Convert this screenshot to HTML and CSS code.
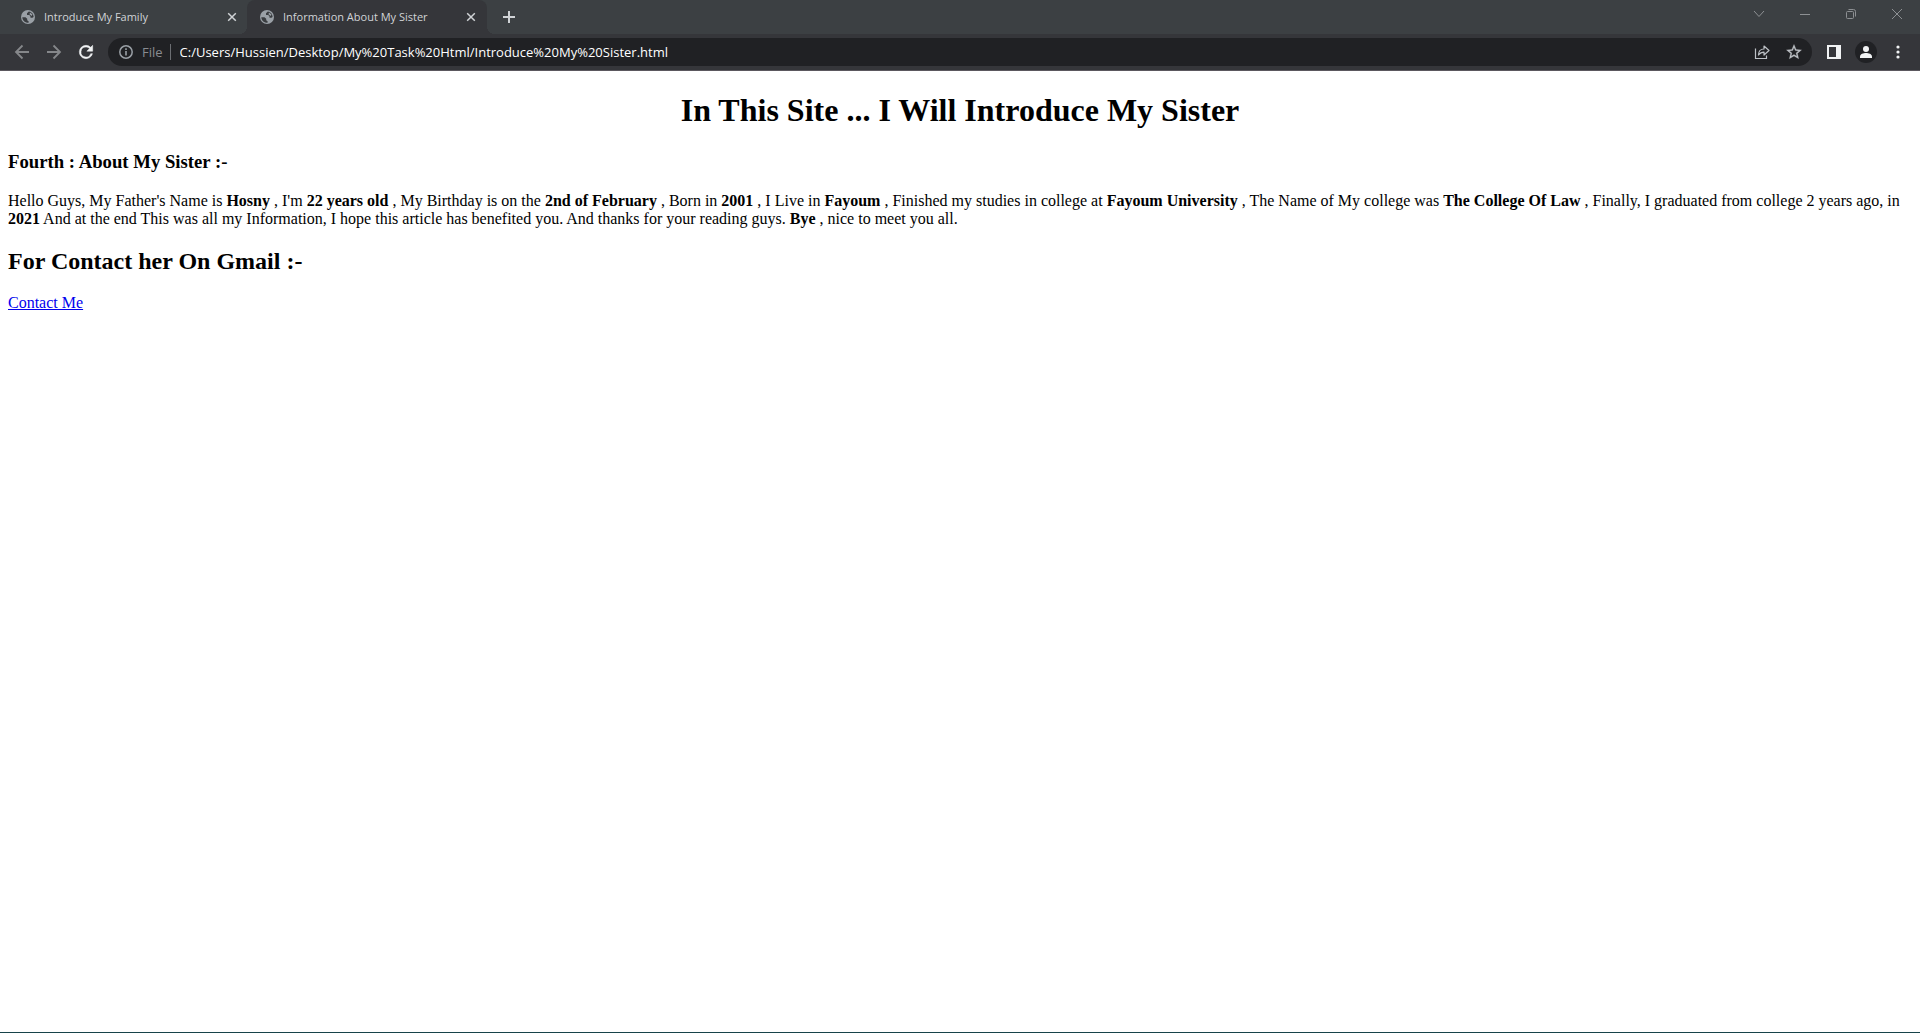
FILE: index.html
```html
<!DOCTYPE html>
<html lang="en">
<head>
<meta charset="utf-8">
<title>Information About My Sister</title>
<link rel="stylesheet" href="styles.css">
</head>
<body>
<svg class="defs" aria-hidden="true">
  <symbol id="globe" viewBox="0 0 16 16"><circle cx="8" cy="8" r="7"/><path d="M2.300 8.200H5.500L7.200 9.800V11.200L8.600 12.200V13.700C5.500 14 2.500 11.700 2.300 8.200zM8.800 2.500L7 4.300V6H9.300L10.500 7.400V8.800H12.400L13.600 8C13.600 5.200 11.600 2.800 8.800 2.500z" fill="#3a3d40"/><path d="M10 3.500L12.500 5.500L11.500 7L9.500 5.200z"/></symbol>
  <symbol id="cross" viewBox="0 0 16 16"><path d="M4.200 4.200l7.600 7.600M11.800 4.200l-7.600 7.600" fill="none" stroke="currentColor" stroke-width="1.500"/></symbol>
</svg>
<div class="browser">
  <header>
    <div class="tab-strip">
      <div class="tab">
        <svg class="favicon"><use href="#globe"/></svg>
        <span class="tab-title">Introduce My Family</span>
        <button class="tab-close" aria-label="Close tab"><svg width="16" height="16"><use href="#cross"/></svg></button>
      </div>
      <div class="tab tab-active">
        <svg class="favicon"><use href="#globe"/></svg>
        <span class="tab-title">Information About My Sister</span>
        <button class="tab-close" aria-label="Close tab"><svg width="16" height="16"><use href="#cross"/></svg></button>
      </div>
      <button class="new-tab" aria-label="New tab"><svg width="14" height="14" viewBox="0 0 14 14"><path d="M7 1v12M1 7h12" stroke="currentColor" stroke-width="2"/></svg></button>
      <div class="window-controls">
        <button aria-label="Search tabs"><svg width="12" height="12" viewBox="0 0 12 12"><path d="M1 3l5 5.500L11 3" fill="none" stroke="currentColor"/></svg></button>
        <button aria-label="Minimize"><svg width="12" height="12" viewBox="0 0 12 12"><path d="M1 6.500h10" stroke="currentColor"/></svg></button>
        <button aria-label="Restore"><svg width="12" height="12" viewBox="0 0 12 12"><rect x="1.500" y="3.500" width="7" height="7" rx="1" fill="none" stroke="currentColor"/><path d="M3.500 1.500h5a2 2 0 0 1 2 2v5" fill="none" stroke="currentColor"/></svg></button>
        <button aria-label="Close window"><svg width="12" height="12" viewBox="0 0 12 12"><path d="M1 1l10 10M11 1L1 11" stroke="currentColor"/></svg></button>
      </div>
    </div>
    <div class="toolbar">
      <button class="tool dim" aria-label="Back"><svg width="16" height="16" viewBox="0 0 16 16"><path d="M15 8H2.500M8.500 1.500L2 8l6.500 6.500" fill="none" stroke="currentColor" stroke-width="1.800"/></svg></button>
      <button class="tool dim" aria-label="Forward"><svg width="16" height="16" viewBox="0 0 16 16"><path d="M1 8h12.500M7.500 1.500L14 8l-6.500 6.500" fill="none" stroke="currentColor" stroke-width="1.800"/></svg></button>
      <button class="tool bright" aria-label="Reload"><svg width="20" height="20" viewBox="0 0 24 24"><path fill="currentColor" d="M17.650 6.350A7.960 7.960 0 0 0 12 4a8 8 0 1 0 7.730 10h-2.080A6 6 0 1 1 12 6c1.660 0 3.140.69 4.220 1.780L13 11h7V4z" stroke="currentColor" stroke-width=".6"/></svg></button>
      <div class="omnibox">
        <svg class="info" width="16" height="16" viewBox="0 0 16 16"><circle cx="8" cy="8" r="6.200" fill="none" stroke="currentColor" stroke-width="1.500"/><path d="M8 7v4.500M8 4.300v1.600" stroke="currentColor" stroke-width="1.600"/></svg>
        <label class="scheme" for="url">File</label>
        <input class="url" id="url" type="text" value="C:/Users/Hussien/Desktop/My%20Task%20Html/Introduce%20My%20Sister.html">
        <button class="tool" aria-label="Share"><svg width="16" height="16" viewBox="0 0 16 16"><path d="M1.500 4.500v10h11v-3" fill="none" stroke="currentColor" stroke-width="1.200"/><path d="M4.500 11C4.500 7.500 6.500 5 10 5V2l5 4.500L10 11V8.200C7.500 8.200 6 9 4.500 11z" fill="none" stroke="currentColor" stroke-width="1.200" stroke-linejoin="round"/></svg></button>
        <button class="tool" aria-label="Bookmark this tab"><svg width="18" height="18" viewBox="0 0 24 24"><path fill="currentColor" d="M22 9.240l-7.190-.62L12 2 9.190 8.630 2 9.240l5.460 4.730L5.820 21 12 17.270 18.180 21l-1.630-7.030L22 9.240zM12 15.400l-3.760 2.270 1-4.280-3.320-2.880 4.380-.38L12 6.100l1.710 4.040 4.380.38-3.320 2.880 1 4.280L12 15.400z" stroke="currentColor" stroke-width=".4"/></svg></button>
      </div>
      <button class="tool bright" aria-label="Side panel"><svg width="14" height="14" viewBox="0 0 14 14"><path fill="currentColor" fill-rule="evenodd" d="M0 0h14v14H0zM2 2v10h7V2z"/></svg></button>
      <button class="tool bright" aria-label="Profile"><svg width="22" height="22" viewBox="0 0 22 22"><circle cx="11" cy="11" r="11" fill="#202124"/><circle cx="11" cy="8" r="3" fill="currentColor"/><path d="M5 17v-1.500C5 13 8.500 12 11 12s6 1 6 3.500V17z" fill="currentColor"/></svg></button>
      <button class="tool bright" aria-label="Menu"><svg width="16" height="16" viewBox="0 0 16 16" fill="currentColor"><circle cx="8" cy="3" r="1.600"/><circle cx="8" cy="8" r="1.600"/><circle cx="8" cy="13" r="1.600"/></svg></button>
    </div>
  </header>
  <main>
    <h1>In This Site ... I Will Introduce My Sister</h1>
    <h3>Fourth : About My Sister :-</h3>
    <p>Hello Guys, My Father's Name is <b>Hosny</b> , I'm <b>22 years old</b> , My Birthday is on the <b>2nd of February</b> , Born in <b>2001</b> , I Live in <b>Fayoum</b> , Finished my studies in college at <b>Fayoum University</b> , The Name of My college was <b>The College Of Law</b> , Finally, I graduated from college 2 years ago, in <b>2021</b> And at the end This was all my Information, I hope this article has benefited you. And thanks for your reading guys. <b>Bye</b> , nice to meet you all.</p>
    <h2>For Contact her On Gmail :-</h2>
    <a href="#contact">Contact Me</a>
  </main>
</div>
</body>
</html>
```
FILE: styles.css
```css
* { box-sizing: border-box; }

body {
  margin: 0;
  background: #fff;
  color: #000;
  font-family: "Liberation Serif", "Times New Roman", serif;
  font-size: 16px;
}

.defs { display: none; }

.browser {
  display: flex;
  flex-direction: column;
  min-height: 100vh;
  border-bottom: 1px solid #17434a;
}

header {
  font-family: "Open Sans", "Noto Sans", sans-serif;
  font-size: 11px;
}

button {
  display: flex;
  align-items: center;
  justify-content: center;
  padding: 0;
  border: 0;
  background: none;
  color: inherit;
}

.tab-strip {
  display: flex;
  height: 34px;
  background: #3c4043;
  color: #d0d3d6;
}

.tab {
  display: flex;
  align-items: center;
  width: 240px;
  padding: 0 8px 0 12px;
}

.tab:first-child {
  width: 247px;
  padding: 0 7px 0 20px;
}

.tab-active {
  position: relative;
  border-radius: 8px 8px 0 0;
  background: #35363a;
}

/* Concave feet joining the active tab to the toolbar */
.tab-active::before,
.tab-active::after {
  content: "";
  position: absolute;
  bottom: 0;
  width: 8px;
  height: 8px;
}

.tab-active::before {
  right: 100%;
  background: radial-gradient(circle at 0 0, transparent 8px, #35363a 8px);
}

.tab-active::after {
  left: 100%;
  background: radial-gradient(circle at 100% 0, transparent 8px, #35363a 8px);
}

.favicon {
  width: 16px;
  height: 16px;
  margin-right: 8px;
  fill: #9aa0a6;
}

.tab-title {
  flex: 1;
  padding-bottom: 2px;
  white-space: nowrap;
}

.tab-close {
  width: 16px;
  height: 16px;
}

.new-tab {
  width: 28px;
  margin-left: 8px;
}

.window-controls {
  display: flex;
  margin-left: auto;
  color: #8d9093;
}

.window-controls button {
  width: 46px;
  height: 28px;
}

.toolbar {
  display: flex;
  align-items: center;
  height: 37px;
  padding: 0 6px;
  border-bottom: 1px solid #5b585e;
  background: #35363a;
}

.tool {
  flex: none;
  width: 32px;
  height: 28px;
  color: #bdc1c6;
}

.dim { color: #85878a; }

.bright { color: #f1f3f4; }

.omnibox {
  display: flex;
  flex: 1;
  align-items: center;
  height: 28px;
  margin: 0 6px;
  padding: 0 2px 0 10px;
  border-radius: 14px;
  background: #202124;
  font-size: 13px;
}

.info { color: #9aa0a6; }

.scheme {
  margin-left: 8px;
  padding-right: 7px;
  border-right: 1px solid #6b6e72;
  color: #888c91;
  line-height: 16px;
}

.url {
  flex: 1;
  min-width: 0;
  padding: 0 0 0 9px;
  border: 0;
  outline: 0;
  background: none;
  color: #fff;
  font: inherit;
}

main {
  flex: 1;
  padding: 0 8px;
}

h1 {
  font-size: 32px;
  text-align: center;
}

a { color: #0000ee; }
```
